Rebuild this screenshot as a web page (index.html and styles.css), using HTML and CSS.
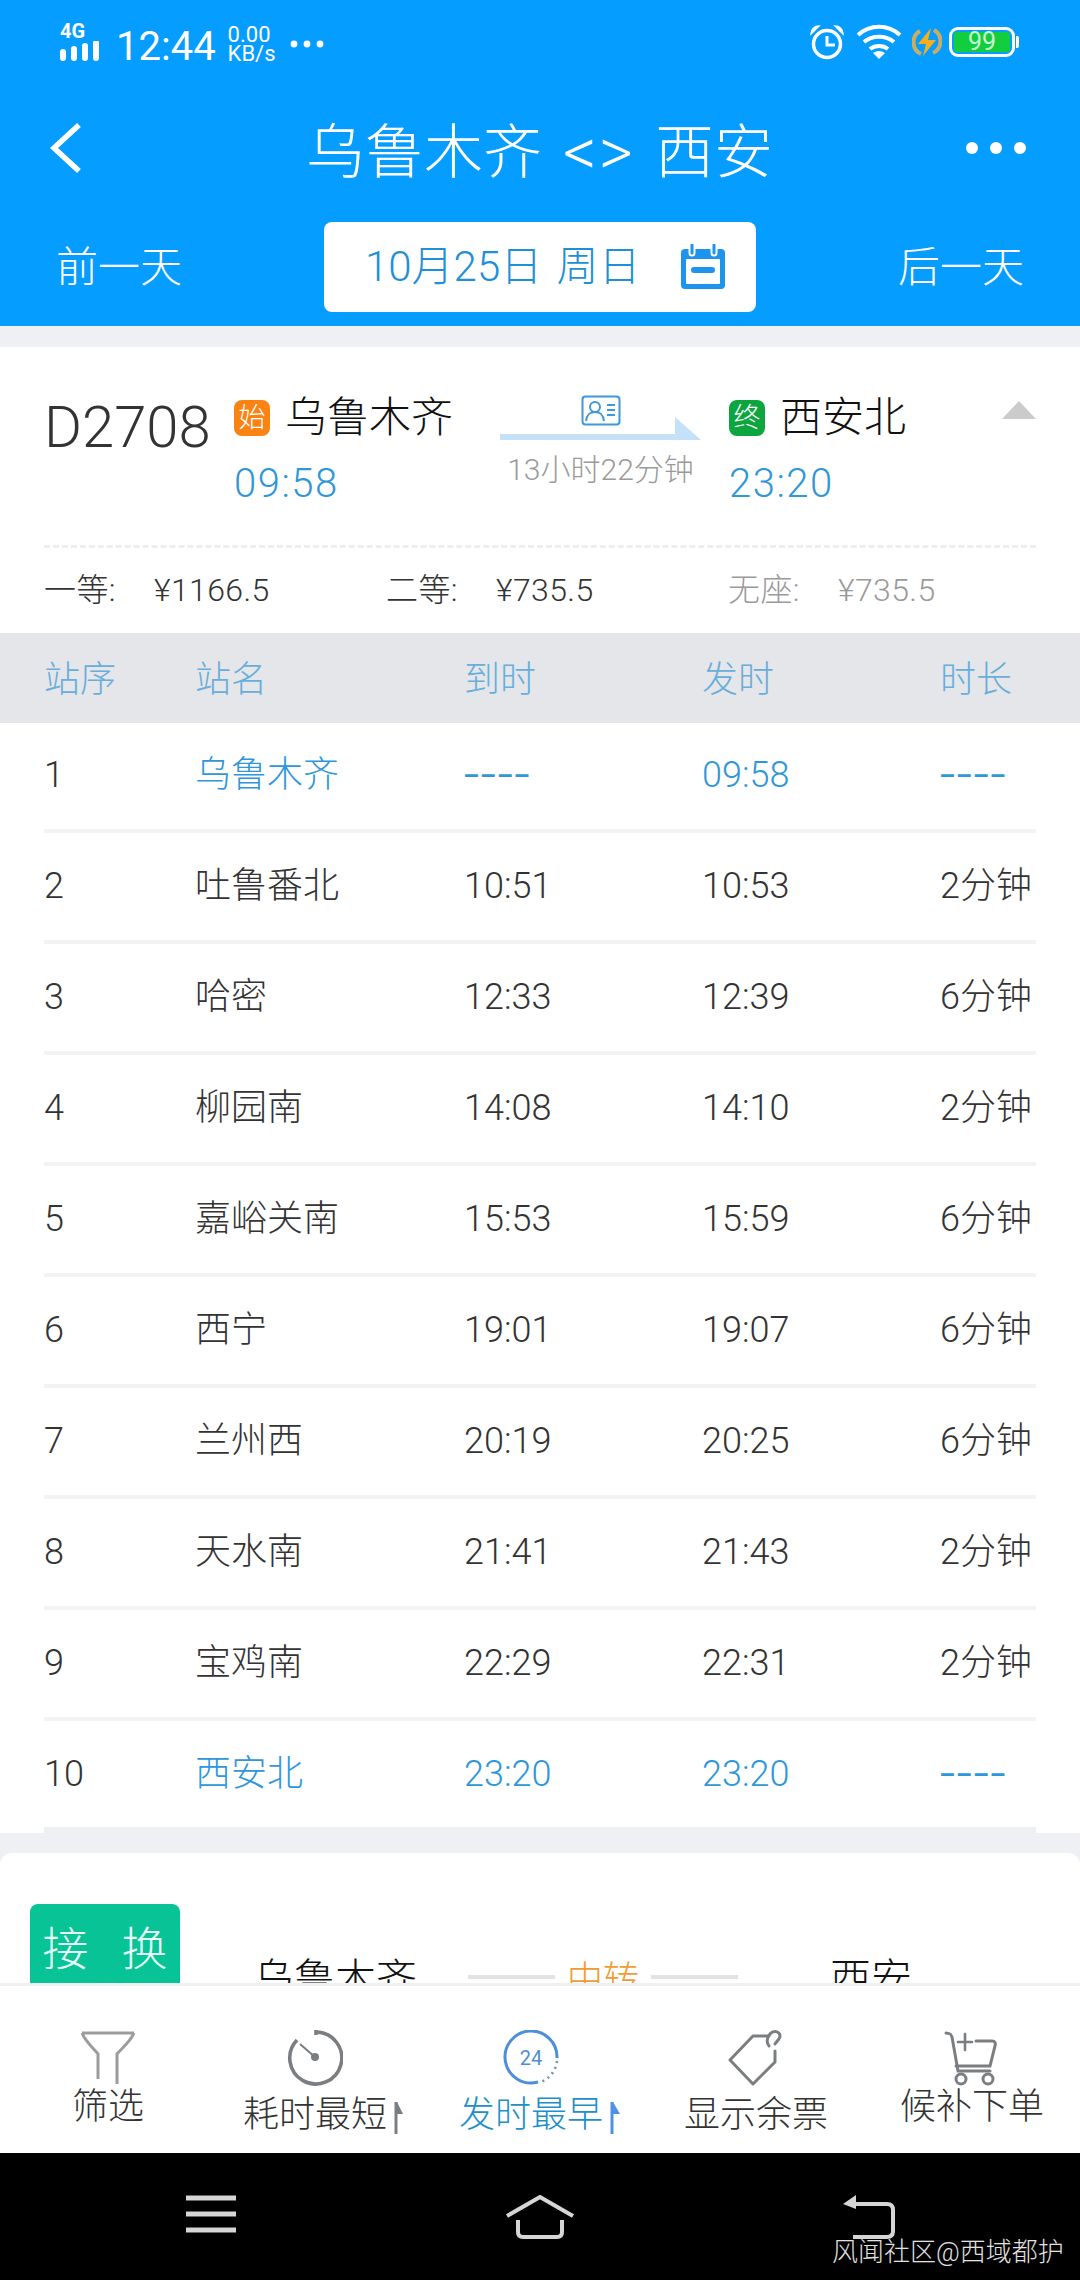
FILE: index.html
```html
<!DOCTYPE html>
<html lang="zh">
<head>
<meta charset="utf-8">
<title>乌鲁木齐 &lt;&gt; 西安</title>
<link rel="stylesheet" href="styles.css">
</head>
<body>
<div class="page">
  <header class="top">
    <div class="status">
      <div class="status-left">
        <div class="signal">
          <span class="net">4G</span>
          <svg class="bars" width="44" height="20" viewBox="0 0 44 20"><path d="M3 11v6M14 8v9M25 5v12M36 2v15" stroke="#fff" stroke-width="6" stroke-linecap="round" fill="none"/></svg>
        </div>
        <span class="clock">12:44</span>
        <div class="speed"><span>0.00</span><span>KB/s</span></div>
        <svg class="sdots" width="34" height="8" viewBox="0 0 34 8"><circle cx="4" cy="4" r="3.4" fill="#fff"/><circle cx="17" cy="4" r="3.4" fill="#fff"/><circle cx="30" cy="4" r="3.4" fill="#fff"/></svg>
      </div>
      <div class="status-right">
        <svg width="36" height="36" viewBox="0 0 36 36" fill="none" stroke="#fff"><circle cx="18" cy="20" r="13.5" stroke-width="3.5"/><path d="M18 12v9h8" stroke-width="3"/><path d="M2 10c0-5 4-8 8-8zM34 10c0-5-4-8-8-8z" fill="#fff" stroke-width="1.5"/></svg>
        <svg class="wifi" width="46" height="36" viewBox="0 0 46 36" fill="none" stroke="#fff" stroke-width="4"><path d="M2 11c12-11 30-11 42 0M8 18c8-7 22-7 30 0M14 25c5-4 13-4 18 0"/><path d="M17 29q6-4 12 0l-6 6z" fill="#fff" stroke="none"/></svg>
        <svg class="bolt" width="30" height="32" viewBox="0 0 30 32"><path d="M8 5a13 13 0 0 0 1 23M22 4a13 13 0 0 1-1 23" fill="none" stroke="#c9ad62" stroke-width="4"/><path d="M19 2 6 18h8l-3 12 13-16h-8z" fill="#f7ae1b"/></svg>
        <div class="battery"><div class="battery-body"><span class="battery-fill">99</span></div><span class="battery-cap"></span></div>
      </div>
    </div>
    <nav class="navbar">
      <svg class="back" width="36" height="50" viewBox="0 0 36 50" fill="none" stroke="#fff" stroke-width="5.5"><path d="M31 2 6 25l25 23"/></svg>
      <h1 class="title">乌鲁木齐<span class="swap">&lt;&gt;</span>西安</h1>
      <svg class="more" width="62" height="14" viewBox="0 0 62 14"><circle cx="7" cy="7" r="6" fill="#fff"/><circle cx="31" cy="7" r="6" fill="#fff"/><circle cx="55" cy="7" r="6" fill="#fff"/></svg>
    </nav>
    <div class="daterow">
      <span class="dayjump">前一天</span>
      <div class="datebox">
        <span class="datetext">10月25日 周日</span>
        <svg width="46" height="46" viewBox="0 0 46 46"><rect x="1" y="5" width="44" height="40" rx="4" fill="#1f94ec"/><rect x="6" y="15" width="34" height="25" rx="1" fill="#fff"/><path d="M12 3v6M34 3v6" stroke="#fff" stroke-width="7" stroke-linecap="round"/><path d="M12 1v8M34 1v8" stroke="#1f94ec" stroke-width="3" stroke-linecap="round"/><rect x="11" y="23" width="24" height="6" rx="3" fill="#1f94ec"/></svg>
      </div>
      <span class="dayjump">后一天</span>
    </div>
  </header>

  <main class="scroll">
    <section class="train">
      <div class="train-head">
        <span class="train-no">D2708</span>
        <div class="stop">
          <div class="stop-name"><span class="tag tag-start">始</span><span>乌鲁木齐</span></div>
          <span class="stop-time">09:58</span>
        </div>
        <div class="route">
          <svg class="idcard" width="40" height="31" viewBox="0 0 40 31" fill="none" stroke="#3f97dc" stroke-width="2"><rect x="1.5" y="1.5" width="37" height="28" rx="3"/><circle cx="14" cy="12" r="5"/><path d="M5 26c1-7 4-9 9-9s8 2 9 9M26 10h8M26 15h8M26 20h8"/></svg>
          <svg class="arrow" width="201" height="23" viewBox="0 0 201 23"><path d="M0 17h175V0l26 23H0z" fill="#c4e1fa"/></svg>
          <span class="duration">13小时22分钟</span>
        </div>
        <div class="stop stop-end">
          <div class="stop-name"><span class="tag tag-end">终</span><span>西安北</span></div>
          <span class="stop-time">23:20</span>
        </div>
        <svg class="collapse" width="34" height="18" viewBox="0 0 34 18"><path d="M17 0 34 18H0z" fill="#cbcbcb"/></svg>
      </div>
      <div class="prices">
        <div class="price"><span class="seat">一等:</span><span>¥1166.5</span></div>
        <div class="price"><span class="seat">二等:</span><span>¥735.5</span></div>
        <div class="price price-off"><span class="seat">无座:</span><span>¥735.5</span></div>
      </div>
    </section>

    <div class="grid grid-head"><span>站序</span><span>站名</span><span>到时</span><span>发时</span><span>时长</span></div>
    <div class="grid row"><span>1</span><span class="hl">乌鲁木齐</span><span class="hl dash">----</span><span class="hl">09:58</span><span class="hl dash">----</span></div>
    <div class="grid row"><span>2</span><span>吐鲁番北</span><span>10:51</span><span>10:53</span><span>2分钟</span></div>
    <div class="grid row"><span>3</span><span>哈密</span><span>12:33</span><span>12:39</span><span>6分钟</span></div>
    <div class="grid row"><span>4</span><span>柳园南</span><span>14:08</span><span>14:10</span><span>2分钟</span></div>
    <div class="grid row"><span>5</span><span>嘉峪关南</span><span>15:53</span><span>15:59</span><span>6分钟</span></div>
    <div class="grid row"><span>6</span><span>西宁</span><span>19:01</span><span>19:07</span><span>6分钟</span></div>
    <div class="grid row"><span>7</span><span>兰州西</span><span>20:19</span><span>20:25</span><span>6分钟</span></div>
    <div class="grid row"><span>8</span><span>天水南</span><span>21:41</span><span>21:43</span><span>2分钟</span></div>
    <div class="grid row"><span>9</span><span>宝鸡南</span><span>22:29</span><span>22:31</span><span>2分钟</span></div>
    <div class="grid row row-last"><span>10</span><span class="hl">西安北</span><span class="hl">23:20</span><span class="hl">23:20</span><span class="hl dash">----</span></div>

    <section class="transfer">
      <span class="transfer-badge">接 换</span>
      <span class="transfer-from">乌鲁木齐</span>
      <div class="transfer-mid"><i></i><span>中转</span><i></i></div>
      <span class="transfer-to">西安</span>
    </section>
  </main>

  <footer class="tabs">
    <div class="tab tab-high">
      <svg width="56" height="56" viewBox="0 0 56 56" fill="none" stroke="#9a9c9e" stroke-width="3"><path d="M2 3h52M2 3c3 8 12 16 16 21v25M54 3c-3 8-13 16-17 21v30"/></svg>
      <span>筛选</span>
    </div>
    <div class="tab tab-sort">
      <svg width="56" height="56" viewBox="0 0 56 56" fill="none" stroke="#7b7e81" stroke-width="3.6"><path d="M29 2a26 26 0 1 1-19 8"/><path d="M29 0v5"/><path d="M13 14 29 28" stroke-width="2"/><circle cx="28" cy="27" r="4" fill="#7b7e81" stroke="none"/></svg>
      <span class="sort">耗时最短<svg class="sort-mark" width="10" height="32" viewBox="0 0 10 32"><path d="M2 0v32" stroke="#7b7e81" stroke-width="3"/><path d="M3 0l6 12H3z" fill="#7b7e81"/></svg></span>
    </div>
    <div class="tab tab-sort tab-on">
      <svg width="56" height="56" viewBox="0 0 56 56" fill="none"><path d="M35 52A26 26 0 1 1 54 28" stroke="#4d8fd6" stroke-width="3"/><path d="M54 31A26 26 0 0 1 38 52" stroke="#6f93b8" stroke-width="2.6" stroke-dasharray="2 4"/><text x="28" y="35" text-anchor="middle" class="day24">24</text></svg>
      <span class="sort">发时最早<svg class="sort-mark" width="10" height="32" viewBox="0 0 10 32"><path d="M2 0v32" stroke="#4d92e6" stroke-width="3"/><path d="M3 0l7 12H3z" fill="#4d92e6"/></svg></span>
    </div>
    <div class="tab">
      <svg width="56" height="56" viewBox="0 0 56 56" fill="none" stroke="#7b7e81" stroke-width="3" stroke-linejoin="round" stroke-linecap="round"><path d="M41 6H25L2 30l23 24 22-22V21"/><path d="M41 16c-3-3-2-10 2-13 4-3 9-1 9 3 0 3-3 5-5 8"/></svg>
      <span class="sort">显示余票</span>
    </div>
    <div class="tab tab-high">
      <svg width="56" height="56" viewBox="0 0 56 56" fill="none" stroke="#7b7e81" stroke-width="3" stroke-linecap="round"><path d="M2 3c4 0 5 1 6 4l6 34h32"/><path d="M32 11h16c3 0 4 2 3 5l-5 20H12"/><path d="M21 4v16M14 12h14" stroke-width="2.6"/><circle cx="17" cy="49" r="5"/><circle cx="44" cy="49" r="5"/></svg>
      <span>候补下单</span>
    </div>
  </footer>

  <div class="sysnav">
    <svg width="50" height="38" viewBox="0 0 50 38"><path d="M0 3h50M0 19h50M0 35h50" stroke="#d6d6d6" stroke-width="5"/></svg>
    <svg width="70" height="44" viewBox="0 0 70 44" fill="none" stroke="#d6d6d6" stroke-width="4"><path d="M2 21 35 2l33 19"/><path d="M13 25v12q0 5 5 5h34q5 0 5-5V25"/></svg>
    <svg width="52" height="44" viewBox="0 0 52 44" fill="none" stroke="#d6d6d6" stroke-width="4"><path d="M6 9h38q6 0 6 6v21q0 6-6 6H10"/><path d="M0 9 13 0v14z" fill="#d6d6d6" stroke="none"/></svg>
    <span class="mark">风闻社区@西域都护</span>
  </div>
</div>
</body>
</html>
```

FILE: styles.css
```css
* { box-sizing: border-box; }
html, body { margin: 0; padding: 0; }
body { background: #000; font-family: Roboto, "Noto Sans CJK SC", sans-serif; font-weight: 300; color: #333; }
.page { width: 1080px; height: 2280px; display: flex; flex-direction: column; overflow: hidden; background: #eff0f4; }

.top { height: 326px; flex: none; background: #059dff; color: #fff; display: flex; flex-direction: column; }
.status { height: 84px; padding: 8px 61px 0 60px; display: flex; justify-content: space-between; align-items: center; }
.status-left, .status-right { display: flex; align-items: center; }
.signal { width: 46px; display: flex; flex-direction: column; gap: 1px; margin-top: -10px; }
.net { font: 700 20px/18px Roboto, sans-serif; }
.bars { display: block; }
.clock { font-size: 40px; font-weight: 400; margin-left: 10px; }
.speed { display: flex; flex-direction: column; margin-left: 12px; margin-top: -4px; font-size: 22px; line-height: 19px; font-weight: 400; }
.sdots { margin-left: 14px; margin-top: -4px; }
.status-right { gap: 8px; margin-top: -8px; }
.wifi { margin-left: 3px; }
.bolt { margin-left: 2px; }
.battery { display: flex; align-items: center; margin-left: -1px; }
.battery-body { width: 66px; height: 30px; border: 3px solid #fff; border-radius: 9px; padding: 2px; display: flex; }
.battery-fill { flex: 1; background: #12cd3e; border-radius: 3px; color: #c6f9d2; font-size: 25px; line-height: 20px; text-align: center; font-weight: 400; }
.battery-cap { width: 3px; height: 12px; background: #fff; border-radius: 0 2px 2px 0; margin-left: 1px; }

.navbar { height: 128px; padding: 0 53px 0 48px; position: relative; display: flex; justify-content: space-between; align-items: center; }
.title { position: absolute; left: 306px; top: 33px; margin: 0; font-size: 59px; line-height: 72px; font-weight: 300; white-space: nowrap; display: flex; align-items: center; }
.swap { font-size: 66px; letter-spacing: 2px; margin: 0 20px 0 21px; }

.daterow { height: 90px; padding: 0 56px; margin-top: 10px; display: flex; justify-content: space-between; align-items: center; }
.dayjump { font-size: 42px; margin-top: -8px; }
.datebox { width: 432px; height: 90px; background: #fff; border-radius: 8px; color: #1f8fd8; font-size: 42px; display: flex; align-items: center; justify-content: space-between; padding: 0 30px 0 41px; }
.datetext { word-spacing: 4px; margin-top: -9px; }

.scroll { flex: 1; min-height: 0; overflow: hidden; padding-top: 21px; }
.train { height: 286px; background: #fff; padding: 0 44px; }
.train-head { height: 201px; position: relative; border-bottom: 3px dashed #eceef0; display: flex; align-items: flex-start; padding-top: 51px; }
.train-no { font-size: 58px; line-height: 60px; width: 190px; color: #333; margin-top: -1px; }
.stop { display: flex; flex-direction: column; width: 266px; }
.stop-name { display: flex; align-items: center; gap: 15px; font-size: 42px; line-height: 40px; color: #111; }
.tag { width: 36px; height: 36px; border-radius: 8px; color: #fff; font-size: 27px; line-height: 36px; text-align: center; }
.tag-start { background: #fa8314; }
.tag-end { background: #0da53e; }
.stop-time { font-size: 40px; letter-spacing: 1.5px; line-height: 44px; color: #2f97d9; margin-top: 24px; }
.route { position: absolute; left: 456px; top: 48px; width: 201px; display: flex; flex-direction: column; align-items: center; }
.idcard { display: block; }
.arrow { display: block; margin-top: -9px; margin-bottom: 12px; }
.duration { font-size: 30px; line-height: 36px; color: #9a9a9a; white-space: nowrap; }
.stop-end { position: absolute; left: 685px; top: 51px; width: auto; }
.collapse { position: absolute; right: 0; top: 54px; }
.prices { height: 82px; padding-top: 2px; display: flex; align-items: center; font-size: 32px; }
.price { width: 342px; flex: none; display: flex; align-items: baseline; gap: 20px; letter-spacing: .4px; color: #333; line-height: 40px; }
.seat { width: 90px; }
.price-off { color: #9a9a9a; }

.grid { display: grid; grid-template-columns: 151px 269px 238px 238px 1fr; padding: 0 44px; align-items: baseline; white-space: nowrap; line-height: 40px; }
.grid-head { height: 90px; padding-top: 27px; background: #e5e6e9; color: #68aedb; font-size: 36px; }
.row { height: 111px; padding-top: 32px; background: #fff; font-size: 36px; color: #333; position: relative; }
.row::after { content: ""; position: absolute; left: 44px; right: 44px; bottom: 1px; height: 4px; background: #f3f3f4; }
.row-last::after { bottom: 0; height: 6px; background: #eff0f4; }
.hl { color: #2f97d9; }
.dash { letter-spacing: 1.3px; font-weight: 400; transform: scaleX(1.5); transform-origin: left center; }

.transfer { margin-top: 20px; height: 240px; background: #fff; border-radius: 12px 12px 0 0; position: relative; }
.transfer-badge { position: absolute; left: 30px; top: 51px; width: 150px; height: 100px; background: #07c396; color: #e8fff8; border-radius: 8px; font-size: 46px; word-spacing: 22px; line-height: 90px; text-align: center; }
.transfer-from, .transfer-to, .transfer-mid { position: absolute; top: 102px; font-size: 41px; line-height: 48px; color: #111; }
.transfer-from { left: 253px; }
.transfer-to { left: 830px; }
.transfer-mid { left: 468px; width: 270px; top: 103px; font-size: 36px; display: flex; align-items: center; justify-content: space-between; color: #f29b32; }
.transfer-mid i { width: 87px; height: 4px; margin-top: -6px; background: #e2e3e5; }

.tabs { height: 170px; flex: none; background: #fff; border-top: 3px solid #eef0f3; display: grid; grid-template-columns: 216px 216px 216px 216px 216px; padding-top: 44px; font-size: 36px; color: #333; }
.tab { display: flex; flex-direction: column; align-items: center; }
.tab svg { display: block; }
.tab > span { margin-top: 4px; line-height: 50px; }
.tab-high > span { margin-top: -4px; }
.tab-on { color: #1e8fc9; }
.tab-sort { padding-right: 18px; }
.sort { position: relative; white-space: nowrap; }
.tab .sort-mark { position: absolute; left: 100%; top: 12px; margin-left: 7px; }
.day24 { font: 400 20px Roboto, sans-serif; fill: #4d8fd6; }

.sysnav { height: 127px; flex: none; background: #000; position: relative; display: grid; grid-template-columns: 1fr 1fr 1fr; justify-items: center; align-items: start; padding: 42px 46px 0; }
.mark { position: absolute; left: 832px; top: 82px; font-size: 26px; line-height: 34px; color: #e2e2e2; white-space: nowrap; }
```
